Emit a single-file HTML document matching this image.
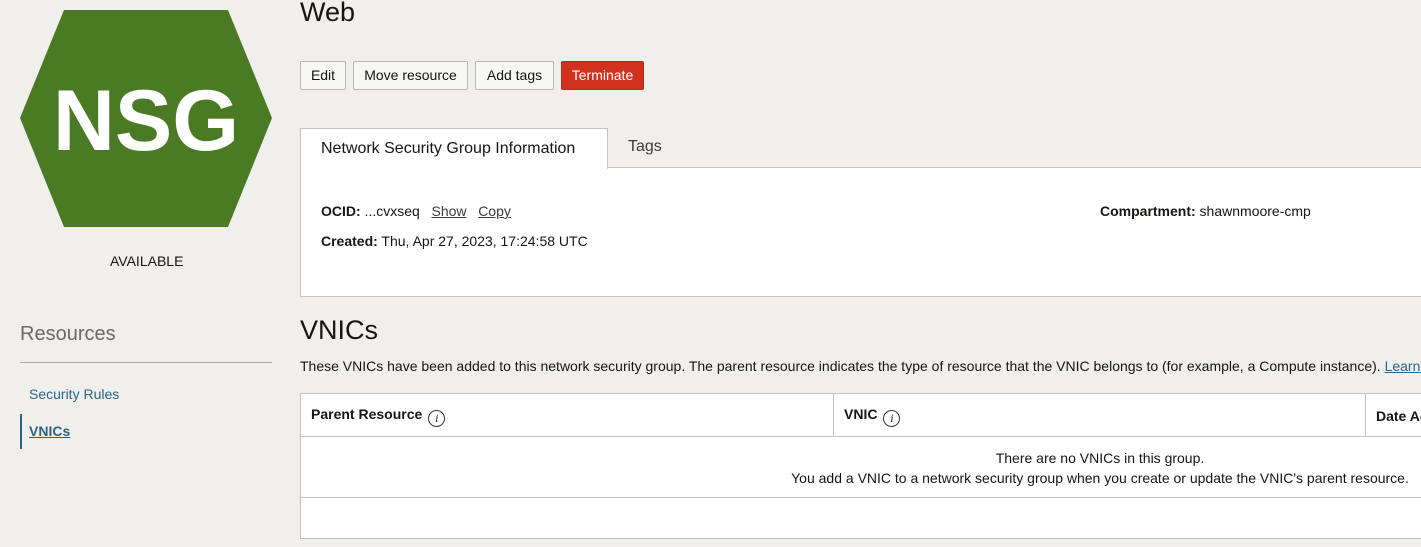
<!DOCTYPE html>
<html><head><style>
body{margin:0;width:1421px;height:547px;overflow:hidden;background:#f0efec;font-family:"Liberation Sans",sans-serif;color:#161513;position:relative}
.a{position:absolute}
.btn{position:absolute;top:61px;height:29px;box-sizing:border-box;border:1px solid #b9b7b2;border-radius:2px;background:#f7f7f6;font-size:14px;line-height:27px;text-align:center;color:#161513}
.lnk{text-decoration:underline;color:#3a3a3a}
.info{display:inline-block;width:17px;height:17px;border:1px solid #333;border-radius:50%;box-sizing:border-box;font:italic 12px "Liberation Serif",serif;text-align:center;line-height:15px;vertical-align:-3px;margin-left:6px}
</style></head><body>
<svg class="a" style="left:0;top:0" width="290" height="240"><polygon points="20,118 64,10 228,10 272,118 228,227 64,227" fill="#4a7a23"/><text x="146" y="150" text-anchor="middle" font-family="Liberation Sans" font-weight="bold" font-size="86" fill="#fff">NSG</text></svg>
<div class="a" style="left:110px;top:253px;font-size:14px">AVAILABLE</div>
<div class="a" style="left:20px;top:323px;font-size:20px;color:#6b6a67">Resources</div>
<div class="a" style="left:20px;top:362px;width:252px;border-top:1px solid #aaa"></div>
<div class="a" style="left:29px;top:386px;font-size:14px;color:#2b6585">Security Rules</div>
<div class="a" style="left:20px;top:414px;height:35px;border-left:2px solid #2b6585"></div>
<div class="a" style="left:29px;top:423px;font-size:14px;font-weight:bold;color:#2b6585;text-decoration:underline">VNICs</div>
<div class="a" style="left:300px;top:-3px;font-size:27px">Web</div>
<div class="btn" style="left:300px;width:46px">Edit</div>
<div class="btn" style="left:353px;width:115px">Move resource</div>
<div class="btn" style="left:475px;width:79px">Add tags</div>
<div class="btn" style="left:561px;width:83px;background:#d0321f;border-color:#b22a19;color:#fff">Terminate</div>
<div class="a" style="left:300px;top:167px;width:1140px;height:130px;background:#fff;border:1px solid #c4c2bf;box-sizing:border-box"></div>
<div class="a" style="left:300px;top:128px;width:308px;height:41px;background:#fff;border:1px solid #c4c2bf;border-bottom:none;box-sizing:border-box;font-size:16px;line-height:40px;padding-left:20px">Network Security Group Information</div>
<div class="a" style="left:628px;top:138px;font-size:16px;color:#3a3a3a">Tags</div>
<div class="a" style="left:321px;top:203px;font-size:14px"><b>OCID:</b> ...cvxseq &nbsp; <span class="lnk">Show</span> &nbsp; <span class="lnk">Copy</span></div>
<div class="a" style="left:321px;top:233px;font-size:14px"><b>Created:</b> Thu, Apr 27, 2023, 17:24:58 UTC</div>
<div class="a" style="left:1100px;top:203px;font-size:14px"><b>Compartment:</b> shawnmoore-cmp</div>
<div class="a" style="left:300px;top:315px;font-size:27px">VNICs</div>
<div class="a" style="left:300px;top:358px;font-size:14px;white-space:nowrap">These VNICs have been added to this network security group. The parent resource indicates the type of resource that the VNIC belongs to (for example, a Compute instance). <span style="color:#2b6585;text-decoration:underline">Learn more</span></div>
<div class="a" style="left:300px;top:393px;width:1140px;height:146px;background:#fff;border:1px solid #c4c2bf;box-sizing:border-box"></div>
<div class="a" style="left:300px;top:436px;width:1140px;border-top:1px solid #c4c2bf"></div>
<div class="a" style="left:300px;top:497px;width:1140px;border-top:1px solid #c4c2bf"></div>
<div class="a" style="left:833px;top:393px;height:43px;border-left:1px solid #c4c2bf"></div>
<div class="a" style="left:1365px;top:393px;height:43px;border-left:1px solid #c4c2bf"></div>
<div class="a" style="left:311px;top:406px;font-size:14px;font-weight:bold">Parent Resource<span class="info">i</span></div>
<div class="a" style="left:844px;top:406px;font-size:14px;font-weight:bold">VNIC<span class="info">i</span></div>
<div class="a" style="left:1376px;top:408px;font-size:14px;font-weight:bold;white-space:nowrap">Date Added</div>
<div class="a" style="left:700px;top:448px;width:800px;text-align:center;font-size:14px;line-height:20px">There are no VNICs in this group.<br>You add a VNIC to a network security group when you create or update the VNIC's parent resource.</div>
</body></html>
